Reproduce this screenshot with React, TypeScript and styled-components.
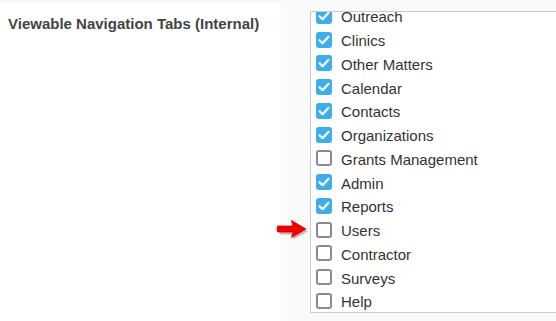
import React from "react";
import { createGlobalStyle, styled } from "styled-components";

const tabs = [
	{ name: "Outreach", checked: true },
	{ name: "Clinics", checked: true },
	{ name: "Other Matters", checked: true },
	{ name: "Calendar", checked: true },
	{ name: "Contacts", checked: true },
	{ name: "Organizations", checked: true },
	{ name: "Grants Management", checked: false },
	{ name: "Admin", checked: true },
	{ name: "Reports", checked: true },
	{ name: "Users", checked: false },
	{ name: "Contractor", checked: false },
	{ name: "Surveys", checked: false },
	{ name: "Help", checked: false },
];

export default function App() {
	return (
		<>
			<GlobalStyle />
			<FormRow>
				<LabelCol>
					<FieldLabel>Viewable Navigation Tabs (Internal)</FieldLabel>
				</LabelCol>
				<FieldCol>
					<ListBox>
						<List>
							{tabs.map((tab) => (
								<Option key={tab.name}>
									<Box $checked={tab.checked}>
										{tab.checked && (
											<svg width="12" height="10" viewBox="0 0 12 10">
												<path
													d="M1.5 5.2 L4.6 8.2 L10.5 1.8"
													fill="none"
													stroke="#fff"
													strokeWidth="2.2"
													strokeLinecap="round"
													strokeLinejoin="round"
												/>
											</svg>
										)}
									</Box>
									<OptionText>{tab.name}</OptionText>
								</Option>
							))}
						</List>
					</ListBox>
					{/* annotation arrow pointing at the Users row */}
					<Arrow />
				</FieldCol>
			</FormRow>
		</>
	);
}

function Arrow() {
	return (
		<ArrowMark width="34" height="22" viewBox="0 0 34 22">
			<path
				d="M2 7 H17 L15.5 2 L30 10 L15.5 18 L17 13 H2 Z"
				fill="#6a0000"
				opacity="0.3"
				transform="translate(1.5 2.5)"
			/>
			<path
				d="M1.5 7 Q0.5 10 1.5 13 H17 L15.5 18.5 L30 10 L15.5 1.5 L17 7 Z"
				fill="#f00000"
				stroke="#d40000"
				strokeWidth="0.8"
				strokeLinejoin="round"
			/>
		</ArrowMark>
	);
}

const GlobalStyle = createGlobalStyle`
	html, body {
		margin: 0;
		padding: 0;
		background: #fff;
		overflow: hidden;
	}
	body {
		font-family: "Liberation Sans", Arial, sans-serif;
	}
`;

const FormRow = styled.div`
	display: flex;
	width: 556px;
	height: 321px;
	overflow: hidden;
`;

const LabelCol = styled.div`
	width: 281px;
	flex-shrink: 0;
	padding: 15px 0 0 8px;
	box-sizing: border-box;
	background: linear-gradient(180deg, #f2f2f2 0px, #ffffff 4px);
`;

const FieldLabel = styled.div`
	font-size: 15px;
	font-weight: 700;
	color: #444;
	line-height: 18px;
`;

const FieldCol = styled.div`
	position: relative;
	flex: 1;
	background: #fafafa;
	padding: 11px 0 0 29px;
	min-width: 0;
`;

const ListBox = styled.div`
	width: 320px;
	height: 302px;
	box-sizing: border-box;
	border: 1px solid #cbcbcb;
	border-right: none;
	background: #fff;
	overflow: hidden;
`;

const List = styled.div`
	margin-top: -8px;
	padding-left: 5px;
	display: flex;
	flex-direction: column;
`;

const Option = styled.label`
	display: flex;
	align-items: center;
	gap: 9px;
	height: 23.76px;
`;

const Box = styled.span<{ $checked: boolean }>`
	width: 16px;
	height: 16px;
	box-sizing: border-box;
	border-radius: 3px;
	display: flex;
	align-items: center;
	justify-content: center;
	background: ${(p) => (p.$checked ? "#3daee9" : "#fff")};
	border: ${(p) => (p.$checked ? "none" : "2px solid #8b8997")};
`;

const OptionText = styled.span`
	font-size: 15px;
	color: #333;
	position: relative;
	top: 1px;
`;

const ArrowMark = styled.svg`
	position: absolute;
	left: -5px;
	top: 219px;
	z-index: 2;
`;
